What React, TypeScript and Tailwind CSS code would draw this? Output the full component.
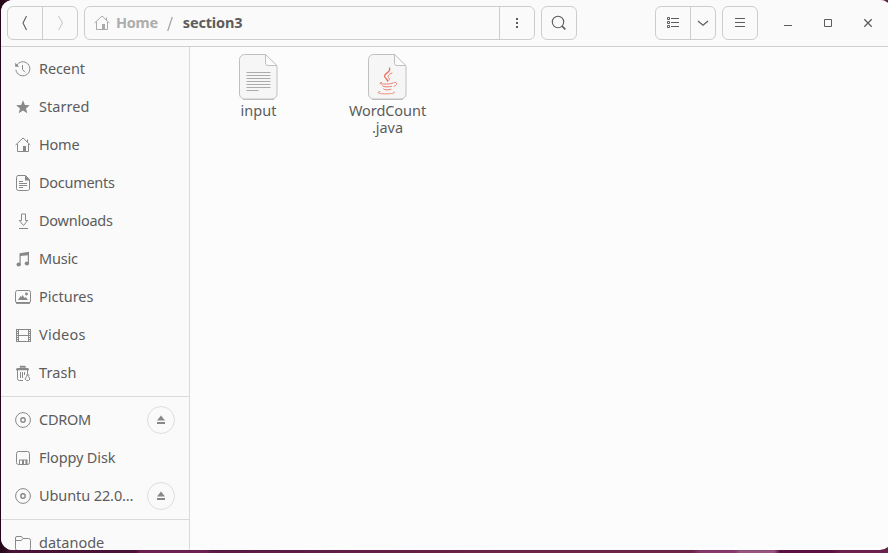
import React from "react";

type IconProps = { children: React.ReactNode; className?: string };

const Icon = ({ children, className = "text-[#888888]" }: IconProps) => (
  <svg width="16" height="16" viewBox="0 0 16 16" fill="none" stroke="currentColor" strokeWidth="1" className={`shrink-0 ${className}`}>
    {children}
  </svg>
);

const HomeShape = () => (
  <>
    <path d="M.6 8 8 1l7.4 7M2.5 7v7.5h11V7M12.5 5V2.5" />
    <path d="M8 9h3v5.5H8z" fill="currentColor" stroke="none" />
  </>
);

const DiscShape = () => (
  <>
    <circle cx="8" cy="8" r="7.4" />
    <circle cx="8" cy="8" r="2.2" strokeWidth="1.4" />
  </>
);

const icons: Record<string, React.ReactNode> = {
  recent: (
    <>
      <path d="M1.6 4.6A7 7 0 1 1 .9 8.8M7.5 4v4.5l2.5 2.8" />
      <path d="M.2 1.8v4h4z" fill="currentColor" stroke="none" />
    </>
  ),
  star: <path d="m8 1.3 1.9 4.6 5 .3L11 9.4l1.3 4.8L8 11.5l-4.3 2.7L5 9.4 1.1 6.2l5-.3z" fill="currentColor" stroke="none" />,
  home: <HomeShape />,
  documents: (
    <>
      <path d="M3 .5h7.5l4 4V13a2 2 0 0 1-2 2.500H3.500a2 2 0 0 1-2-2V2.500A2 2 0 0 1 3 .5Z" />
      <path d="M10 .5v5h5z" fill="currentColor" stroke="none" />
      <path d="M4 6.500h4M4 8.500h8M4 10.500h8M4 12.500h4" />
    </>
  ),
  downloads: <path d="M6.500 1v6.500H4.300l4.200 5 4.200-5h-2.200V1zM4 15.500h9" />,
  music: (
    <>
      <path d="M4.500 2.200 14 .8v11.700h-1.200V4.200l-7.100.9V14H4.500z" fill="currentColor" stroke="none" />
      <ellipse cx="3.700" cy="13.500" rx="2.200" ry="1.900" fill="currentColor" stroke="none" />
      <ellipse cx="11.900" cy="12.500" rx="2.200" ry="1.900" fill="currentColor" stroke="none" />
    </>
  ),
  pictures: (
    <>
      <rect x=".5" y="1.500" width="15" height="12.500" rx="2" />
      <path d="M1 13.500h14M1 14.300h14" />
      <path d="m3 11 2.500-4 1 1 1-2 2.200 3 1-1L13 11z" fill="currentColor" stroke="none" />
      <circle cx="11.500" cy="5" r="1.400" fill="currentColor" stroke="none" />
    </>
  ),
  videos: (
    <>
      <path d="M1.500 2v13M3.500 2v13M13.500 2v13M15.500 2v13M3.500 2.500h10M3.500 8.500h10M3.500 14.500h10" />
      <path d="M2.500 2v13M14.500 2v13" strokeDasharray="1 1" />
    </>
  ),
  trash: (
    <>
      <path d="M5 2h6M1.800 3.500h11.400" strokeWidth="1" />
      <path d="M5.500 2.500V1.500h4v1M1 4.500h13" strokeWidth="1.400" />
      <path d="M2.500 5v8.500q0 2 2 2H8M5.500 7v6M7.500 7v6M9.500 7v3M12.500 5v3" />
      <path d="M12.500 8v1.500M11 10h3.500M11.500 11.500q-3 3 0 4h2q3-1 0-4l-1-1z" />
    </>
  ),
  disc: <DiscShape />,
  floppy: (
    <>
      <rect x="1.500" y="1.500" width="13" height="13" rx="2" />
      <path d="M4 9.500h8.500v5.500H4z" fill="currentColor" stroke="none" />
      <path d="M5 10.500h2V14H5zM9 10.500h1.500V14H9z" fill="#fafafa" stroke="none" />
    </>
  ),
  folder: <path d="M2 1.500h4.500l1.500 2h5.500a2 2 0 0 1 2 2v8a2 2 0 0 1-2 2h-11a2 2 0 0 1-2-2V3A1.500 1.500 0 0 1 2 1.500ZM.5 5.500h5.800L8 3.500" />,
};

type Place = { label: string; icon: string; tracking?: string; eject?: boolean };

const Row = ({ label, icon, tracking = "tracking-normal", eject }: Place) => (
  <li className="flex h-[38px] shrink-0 items-center pr-[14px] pl-[14px]">
    <Icon>{icons[icon]}</Icon>
    <span className={`mb-[2px] ml-2 whitespace-nowrap ${tracking}`}>{label}</span>
    {eject && (
      <button className="ml-auto flex size-7 items-center justify-center rounded-full border border-[#dedede]">
        <Icon>
          <path d="m8 3.500 4 5H4zM4 10h8v2H4z" fill="currentColor" stroke="none" />
        </Icon>
      </button>
    )}
  </li>
);

const places: Place[] = [
  { label: "Recent", icon: "recent", tracking: "tracking-[-0.1px]" },
  { label: "Starred", icon: "star", tracking: "tracking-[0.05px]" },
  { label: "Home", icon: "home", tracking: "tracking-[-0.2px]" },
  { label: "Documents", icon: "documents", tracking: "tracking-[-0.28px]" },
  { label: "Downloads", icon: "downloads", tracking: "tracking-[-0.25px]" },
  { label: "Music", icon: "music", tracking: "tracking-[-0.2px]" },
  { label: "Pictures", icon: "pictures" },
  { label: "Videos", icon: "videos", tracking: "tracking-[0.25px]" },
  { label: "Trash", icon: "trash", tracking: "tracking-[0.1px]" },
];

const drives: Place[] = [
  { label: "CDROM", icon: "disc", tracking: "tracking-[-0.25px]", eject: true },
  { label: "Floppy Disk", icon: "floppy", tracking: "tracking-[-0.13px]" },
  { label: "Ubuntu 22.0…", icon: "disc", tracking: "tracking-[-0.1px]", eject: true },
];

const Sheet = ({ children }: { children: React.ReactNode }) => (
  <svg width="40" height="48" viewBox="0 0 40 48" fill="none">
    <path d="M5.500 1.500h21L38 13v28a5 5 0 0 1-5 5H5.500a5 5 0 0 1-5-5V6.500a5 5 0 0 1 5-5Z" fill="#f6f6f6" stroke="#c0c0c0" />
    <path d="M4 46.500h31" stroke="#b2b2b2" strokeWidth=".7" />
    <path d="M26.500 1.500V10q0 2.500 2.500 2.500h9z" fill="#fcfcfc" stroke="#c0c0c0" />
    {children}
  </svg>
);

const Header = () => (
  <header className="flex h-[47px] shrink-0 items-start border-b border-[#cfcfcf] bg-[#fafafa] pt-[6px] pl-[6px] text-[#5c5c5c]">
    <div className="flex h-[34px] w-[71px] rounded-[6px] border border-[#cdcdcd]">
      <button className="flex w-[35px] items-center justify-center border-r border-[#cdcdcd]">
        <Icon className="text-[#5c5c5c]"><path d="M9.500 1 6 8l3.500 7" strokeWidth="1.100" /></Icon>
      </button>
      <button className="flex flex-1 items-center justify-center">
        <Icon className="text-[#cccccc]"><path d="m6.500 1 4 7-4 7" strokeWidth="1.100" /></Icon>
      </button>
    </div>
    <div className="ml-[6px] flex h-[34px] w-[451px] rounded-[6px] border border-[#cdcdcd]">
      <div className="flex w-[415px] items-center border-r border-[#cdcdcd] pl-[9px] font-bold">
        <Icon className="text-[#a9a9a9]"><HomeShape /></Icon>
        <span className="mb-px ml-[6px] tracking-[-0.3px] text-[#adadad]">Home</span>
        <svg width="6" height="16" viewBox="0 0 6 16" className="mt-px ml-[9px]" stroke="#a3a3a3" strokeWidth="1.200">
          <path d="M5.300 1 .7 15" />
        </svg>
        <span className="mb-px ml-[10px] tracking-[-0.15px] text-[#5c5c5c]">section3</span>
      </div>
      <button className="flex flex-1 items-center justify-center">
        <Icon className="text-[#5c5c5c]"><path d="M7 3h2v2H7zM7 7h2v2H7zM7 11h2v2H7z" fill="currentColor" stroke="none" /></Icon>
      </button>
    </div>
    <button className="ml-[6px] flex h-[34px] w-[36px] items-center justify-center rounded-[6px] border border-[#cdcdcd]">
      <Icon className="text-[#5c5c5c]">
        <circle cx="7" cy="7" r="5.700" strokeWidth="1.100" />
        <path d="m11 11 3.300 3.300" strokeWidth="1.700" />
      </Icon>
    </button>
    <div className="ml-[78px] flex h-[34px] w-[61px] rounded-[6px] border border-[#cdcdcd]">
      <button className="flex w-[35px] items-center justify-center border-r border-[#cdcdcd]">
        <Icon className="text-[#5c5c5c]">
          <path d="M2.500 2.500h2v2h-2zM2.500 6.500h2v2h-2zM2.500 10.500h2v2h-2zM6 3.500h8M6 7.500h8M6 11.500h8" />
        </Icon>
      </button>
      <button className="flex flex-1 items-center justify-center">
        <Icon className="text-[#5c5c5c]"><path d="m3 6 5 4.300L13 6" strokeWidth="1.200" /></Icon>
      </button>
    </div>
    <button className="ml-[6px] flex h-[34px] w-[36px] items-center justify-center rounded-[6px] border border-[#cdcdcd]">
      <Icon className="text-[#5c5c5c]"><path d="M3 3.500h10M3 7.500h10M3 11.500h10" /></Icon>
    </button>
    <div className="ml-[22px] flex h-[34px] items-center gap-6">
      <Icon className="text-[#5c5c5c]"><path d="M4 10.500h8" /></Icon>
      <Icon className="text-[#5c5c5c]"><path d="M4.500 4.500h7v7h-7z" /></Icon>
      <Icon className="text-[#5c5c5c]"><path d="m4.300 4.300 7.400 7.400m0-7.400-7.400 7.400" strokeWidth="1.300" /></Icon>
    </div>
  </header>
);

export default function App() {
  return (
    <div className="h-[553px] w-[888px] overflow-hidden bg-[linear-gradient(90deg,#260719_0,#260719_2px,#4a1238_12px,#4a1238_136px,#6d2152_140px,#6d2152_205px,#5a1a45_212px,#6b2349_500px,#6b2349_692px,#86386c_700px,#86386c_734px,#97547f_740px,#97547f_774px,#5b0f43_780px,#5b0f43_830px,#6b204d_840px)] pl-px font-['Noto_Sans',sans-serif] text-[14.5px] leading-[17px] text-[#5c5c5c]">
      <div className="flex h-[550px] w-[891px] flex-col overflow-hidden rounded-[12px] bg-[#fcfcfc] shadow-[0_0_1px_rgba(0,0,0,0.6)]">
        <Header />
        <div className="flex min-h-0 flex-1">
          <nav className="w-[189px] shrink-0 overflow-hidden border-r border-[#dadada] bg-[#fafafa] pt-[3px]">
            <ul>{places.map((p) => <Row key={p.label} {...p} />)}</ul>
            <hr className="my-1 border-[#dadada]" />
            <ul>{drives.map((p) => <Row key={p.label} {...p} />)}</ul>
            <hr className="my-1 border-[#dadada]" />
            <ul><Row label="datanode" icon="folder" /></ul>
          </nav>
          <main className="flex flex-1 items-start pt-[6px] pl-[4px]">
            <figure className="flex w-[129px] flex-col items-center">
              <Sheet>
                <path d="M7.500 19.500h24M7.500 22.500h24M7.500 25.500h24M7.500 28.500h24M7.500 31.500h24M7.500 34.500h24M7.500 37.500h12" stroke="#ababab" />
              </Sheet>
              <figcaption className="mt-px">input</figcaption>
            </figure>
            <figure className="flex w-[129px] flex-col items-center">
              <Sheet>
                <g stroke="#e8705e" strokeLinecap="round" strokeWidth=".9">
                  <path d="M21.500 15c2 4-5 5-5 8 0 2 3 3 3 5" strokeWidth="1.300" />
                  <path d="M24 20c-3 1-5 3-3 5 1 1 0 2-1 3" />
                  <path d="M13.500 29.500c-4 1-1 1.700 5 1.500 3 0 5-.4 6.500-1M14.500 33c1 1.200 6 1.200 9 .3M15.500 36c1 1.200 5 1.200 7.500.3" />
                  <path d="M26 29.500c4-1 3.500 2.500 0 4M12 38.500c-6 1.700 2 2.600 8 2.300 5-.2 8-.9 6-2" strokeWidth=".8" />
                </g>
              </Sheet>
              <figcaption className="mt-px flex flex-col items-center tracking-[-0.05px]">
                <span>WordCount</span>
                <span>.java</span>
              </figcaption>
            </figure>
          </main>
        </div>
      </div>
    </div>
  );
}
